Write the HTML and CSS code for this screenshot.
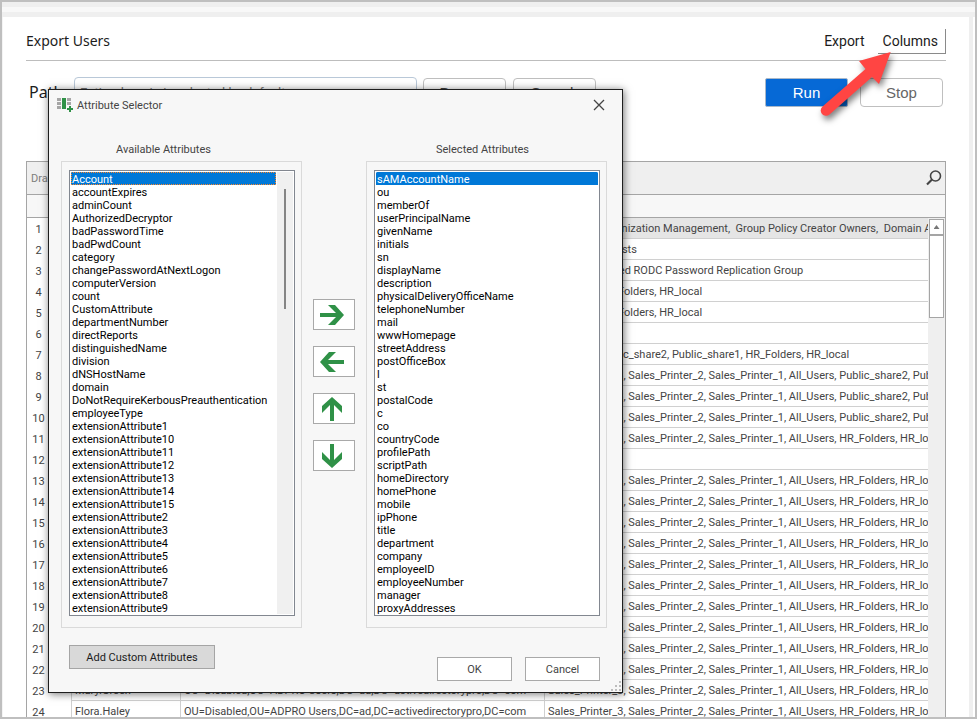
FILE: index.html
```html
<!DOCTYPE html>
<html lang="en">
<head>
    <title>Export Users</title>
    <meta charset="utf-8">
    <link rel="stylesheet" href="styles.css">
</head>
<body>
    <div class="window">
        <div class="strip"></div>
        <div class="page">
            <header class="page-header">
                <h1>Export Users</h1>
                <nav class="menu">
                    <a href="#export">Export</a>
                    <a href="#columns" class="active">Columns</a>
                </nav>
            </header>

            <div class="path-row">
                <label for="path">Path</label>
                <input type="text" id="path" placeholder="Entire domain is selected by default">
                <button class="btn">Browse</button>
                <button class="btn">Search</button>
                <div class="run-buttons">
                    <button class="btn btn-run">Run</button>
                    <button class="btn btn-stop">Stop</button>
                </div>
            </div>

            <div class="grid">
                <div class="group-bar">
                    <span>Drag a column header here to group by that column</span>
                    <button class="search-btn" aria-label="Search">
                        <svg width="16" height="16" viewBox="0 0 16 16" fill="none" stroke="#444">
                            <circle cx="9.5" cy="6" r="5" stroke-width="1.6"/>
                            <path d="M6 9.5L1 14.5" stroke-width="2.2"/>
                        </svg>
                    </button>
                </div>
                <div class="column-bar"></div>
                <div class="grid-body">
                    <table>
                        <colgroup><col class="c-num"><col class="c-name"><col class="c-ou"><col></colgroup>
                        <tbody id="rows"></tbody>
                    </table>
                    <div class="grid-scroll">
                        <div class="scroll-up"></div>
                        <div class="scroll-thumb"></div>
                    </div>
                </div>
            </div>
        </div>
    </div>

    <div class="dialog" role="dialog" aria-labelledby="dialog-title">
        <div class="title-bar">
            <svg width="17" height="16" viewBox="0 0 17 16">
                <path fill="#a6a6a6" d="M0 1h4v3H0zM0 5h4v3H0zM0 9h4v3H0zM10 1h4v3h-4zM10 5h4v3h-4z"/>
                <path fill="#2f9147" d="M5 1h4v11H5zM12 9h2v2h2v2h-2v2h-2v-2h-2v-2h2z"/>
            </svg>
            <span id="dialog-title">Attribute Selector</span>
            <button class="close-btn" aria-label="Close">
                <svg width="12" height="12" viewBox="0 0 12 12"><path d="M1 1l10 10M11 1L1 11" stroke="#444" stroke-width="1.3"/></svg>
            </button>
        </div>

        <div class="lists">
            <div class="list-col">
                <label class="label-available" for="available">Available Attributes</label>
                <div class="group">
                    <div class="listbox">
                        <select id="available" class="focused" size="34">
                            <option selected>Account</option>
                            <option>accountExpires</option>
                            <option>adminCount</option>
                            <option>AuthorizedDecryptor</option>
                            <option>badPasswordTime</option>
                            <option>badPwdCount</option>
                            <option>category</option>
                            <option>changePasswordAtNextLogon</option>
                            <option>computerVersion</option>
                            <option>count</option>
                            <option>CustomAttribute</option>
                            <option>departmentNumber</option>
                            <option>directReports</option>
                            <option>distinguishedName</option>
                            <option>division</option>
                            <option>dNSHostName</option>
                            <option>domain</option>
                            <option>DoNotRequireKerbousPreauthentication</option>
                            <option>employeeType</option>
                            <option>extensionAttribute1</option>
                            <option>extensionAttribute10</option>
                            <option>extensionAttribute11</option>
                            <option>extensionAttribute12</option>
                            <option>extensionAttribute13</option>
                            <option>extensionAttribute14</option>
                            <option>extensionAttribute15</option>
                            <option>extensionAttribute2</option>
                            <option>extensionAttribute3</option>
                            <option>extensionAttribute4</option>
                            <option>extensionAttribute5</option>
                            <option>extensionAttribute6</option>
                            <option>extensionAttribute7</option>
                            <option>extensionAttribute8</option>
                            <option>extensionAttribute9</option>
                        </select>
                        <div class="list-scroll"><div class="list-thumb"></div></div>
                    </div>
                </div>
            </div>

            <div class="move-buttons">
                <button aria-label="Add"><svg viewBox="0 0 24 24"><path d="M0 10h16L8 2h7l9 10-9 10H8l8-8H0z"/></svg></button>
                <button aria-label="Remove"><svg viewBox="0 0 24 24"><path d="M24 10H8l8-8H9L0 12l9 10h7l-8-8h16z"/></svg></button>
                <button aria-label="Move up"><svg viewBox="0 0 24 24"><path d="M10 24V8l-8 8V9l10-9 10 9v7l-8-8v16z"/></svg></button>
                <button aria-label="Move down"><svg viewBox="0 0 24 24"><path d="M10 0v16L2 8v7l10 9 10-9V8l-8 8V0z"/></svg></button>
            </div>

            <div class="list-col">
                <label class="label-selected" for="selected">Selected Attributes</label>
                <div class="group">
                    <div class="listbox">
                        <select id="selected" size="34">
                            <option selected>sAMAccountName</option>
                            <option>ou</option>
                            <option>memberOf</option>
                            <option>userPrincipalName</option>
                            <option>givenName</option>
                            <option>initials</option>
                            <option>sn</option>
                            <option>displayName</option>
                            <option>description</option>
                            <option>physicalDeliveryOfficeName</option>
                            <option>telephoneNumber</option>
                            <option>mail</option>
                            <option>wwwHomepage</option>
                            <option>streetAddress</option>
                            <option>postOfficeBox</option>
                            <option>l</option>
                            <option>st</option>
                            <option>postalCode</option>
                            <option>c</option>
                            <option>co</option>
                            <option>countryCode</option>
                            <option>profilePath</option>
                            <option>scriptPath</option>
                            <option>homeDirectory</option>
                            <option>homePhone</option>
                            <option>mobile</option>
                            <option>ipPhone</option>
                            <option>title</option>
                            <option>department</option>
                            <option>company</option>
                            <option>employeeID</option>
                            <option>employeeNumber</option>
                            <option>manager</option>
                            <option>proxyAddresses</option>
                        </select>
                    </div>
                </div>
            </div>
        </div>

        <div class="dialog-footer">
            <button class="custom-btn">Add Custom Attributes</button>
            <div class="dialog-actions">
                <button>OK</button>
                <button>Cancel</button>
            </div>
        </div>
        <svg class="grip" width="11" height="11" viewBox="0 0 11 11">
            <path fill="#bdbdbd" d="M8 0h2v2H8zM4 4h2v2H4zM8 4h2v2H8zM0 8h2v2H0zM4 8h2v2H4zM8 8h2v2H8z"/>
        </svg>
    </div>

    <svg class="pointer" width="90" height="90" viewBox="0 0 90 90">
        <path fill="#ff4543" d="M80.700 12L49 21l6.500 8L12.500 66.500a5.300 5.300 0 0 0 7 8L62 37l7 7z"/>
    </svg>

    <script src="script.js"></script>
</body>
</html>
```

FILE: styles.css
```css
* {
    box-sizing: border-box;
}
body {
    margin: 0;
    font-family: Roboto, Tahoma, sans-serif;
    font-size: 11px;
    color: #444;
}
button, input, select {
    font-family: inherit;
    font-size: inherit;
    color: inherit;
}
.window {
    display: flex;
    flex-direction: column;
    height: 100vh;
    overflow: hidden;
    border: 2px solid #bfbfbf;
    background: #fff;
}
.strip {
    flex: none;
    height: 15px;
    background: #f8f8f8;
    border-top: 5px solid #efefef;
    border-bottom: 5px solid #efefef;
}
.page {
    flex: 1;
    min-height: 0;
    margin-right: 2px;
    padding: 12px 23px 0;
    border-left: 1px solid #f4f4f4;
    border-right: 4px solid #efefef;
    display: flex;
    flex-direction: column;
}
.page-header {
    flex: none;
    display: flex;
    justify-content: space-between;
    align-items: flex-start;
    height: 32px;
    border-bottom: 1px solid #bdbdbd;
    font-family: "Noto Sans", Tahoma, sans-serif;
    color: #1c1c1c;
}
h1 {
    margin: 0;
    font-size: 14px;
    font-weight: normal;
    line-height: 24px;
}
.menu {
    display: flex;
    gap: 13px;
    font-family: Roboto, Tahoma, sans-serif;
    font-size: 14px;
    line-height: 24px;
}
.menu a {
    color: inherit;
    text-decoration: none;
}
.menu .active {
    padding: 0 7px 0 5px;
    border-right: 1px solid #8a8a8a;
    border-bottom: 1px solid #8a8a8a;
}
.path-row {
    flex: none;
    display: flex;
    align-items: center;
    height: 100px;
    padding: 0 3px 38px;
}
.path-row label {
    width: 45px;
    font-size: 16px;
    font-family: "Noto Sans", Tahoma, sans-serif;
    color: #1c1c1c;
}
.path-row input {
    width: 343px;
    height: 30px;
    margin-right: 6px;
    padding: 0 5px;
    border: 1px solid #b9c8d8;
    border-radius: 4px;
    font-size: 13px;
}
.path-row input::placeholder {
    color: #777;
}
.btn {
    width: 83px;
    height: 29px;
    margin-right: 7px;
    padding: 0;
    border: 1px solid #bfbfbf;
    border-radius: 4px;
    background: #fff;
    font-family: "Liberation Sans", Arial, sans-serif;
    font-size: 15px;
}
.run-buttons {
    display: flex;
    gap: 12px;
    margin-left: auto;
}
.run-buttons .btn {
    margin-right: 0;
}
.btn-run {
    background: #0669d6;
    border-color: #a9b8c9;
    border-radius: 2px;
    color: #fff;
}
.btn-stop {
    color: #666;
}
.grid {
    flex: 1;
    min-height: 0;
    display: flex;
    flex-direction: column;
    border: 1px solid #a5a5a5;
    border-bottom: none;
}
.group-bar {
    flex: none;
    display: flex;
    justify-content: space-between;
    align-items: center;
    height: 33px;
    padding: 0 3px 0 4px;
    background: #efefef;
    border-bottom: 1px solid #a5a5a5;
    font-size: 11px;
    color: #7d7d7d;
}
.search-btn {
    display: flex;
    padding: 0;
    border: none;
    background: none;
}
.column-bar {
    flex: none;
    height: 23px;
    background: #f7f7f7;
    border-bottom: 1px solid #a5a5a5;
}
.grid-body {
    flex: 1;
    min-height: 0;
    display: flex;
    overflow: hidden;
}
.grid table {
    flex: 1;
    width: 0;
    table-layout: fixed;
    border-collapse: separate;
    border-spacing: 0;
}
.c-num {
    width: 44px;
}
.c-name {
    width: 109px;
}
.c-ou {
    width: 364px;
}
td, th {
    height: 21px;
    padding: 2px 3px 0;
    border-bottom: 1px solid #d0d0d0;
    border-left: 1px solid #d0d0d0;
    line-height: 18px;
    overflow: hidden;
    white-space: pre;
}
th {
    padding: 2px 21px 0 0;
    border: none;
    font-weight: normal;
}
tr:first-child td {
    background: #e5e5e5;
}
.grid-scroll {
    width: 17px;
    padding: 1px 1px 0;
    background: #efefef;
}
.scroll-up {
    display: flex;
    justify-content: center;
    height: 16px;
    padding-top: 5px;
    border: 1px solid #a5a5a5;
    background: #fff;
}
.scroll-up::before {
    content: "";
    width: 6px;
    height: 4px;
    background: #777;
    clip-path: polygon(50% 0, 100% 100%, 0 100%);
}
.scroll-thumb {
    height: 83px;
    border: 1px solid #a5a5a5;
    background: #fff;
}

/* attribute selector */
.dialog {
    position: absolute;
    left: 48px;
    top: 89px;
    width: 575px;
    padding: 0 15px 11px 12px;
    border: 1px solid #1e1e1e;
    background: #f7f7f7;
    box-shadow: 1px 1px 8px rgba(0, 0, 0, 0.55);
}
.title-bar {
    display: flex;
    align-items: center;
    height: 30px;
    margin-left: -4px;
    gap: 3px;
}
.close-btn {
    display: flex;
    margin-left: auto;
    margin-right: 2px;
    padding: 0;
    border: none;
    background: none;
}
.lists {
    display: flex;
    padding-top: 21px;
}
.list-col {
    flex: 1;
    min-width: 0;
}
.list-col label {
    display: block;
    height: 20px;
    line-height: 18px;
}
.label-available {
    padding-left: 55px;
}
.label-selected {
    padding-left: 70px;
}
.group {
    padding: 8px 6px 11px 7px;
    border: 1px solid #dadada;
}
.listbox {
    display: flex;
    padding: 1px;
    border: 1px solid #828790;
    background: #fff;
}
.listbox select {
    flex: 1;
    min-width: 0;
    height: 442px;
    padding: 0;
    border: none;
    outline: none;
    background: #fff;
    color: #000;
    overflow: hidden;
}
.listbox option {
    height: 13px;
    min-height: 13px;
    padding: 1px 1px 0;
    line-height: 12px;
}
.listbox option:checked {
    background: #0078d7 linear-gradient(#0078d7, #0078d7);
    color: #fff;
}
.focused option:checked {
    outline: 1px dotted #ff8728;
    outline-offset: -1px;
}
.list-scroll {
    width: 17px;
    padding: 17px 0 0 7px;
    border-left: 1px solid #fff;
    background: #f0f0f0;
}
.list-thumb {
    width: 2px;
    height: 120px;
    background: #858585;
}
.move-buttons {
    flex: none;
    width: 64px;
    padding-top: 158px;
    display: flex;
    flex-direction: column;
    align-items: center;
    gap: 16px;
}
.move-buttons button {
    display: flex;
    align-items: center;
    justify-content: center;
    width: 42px;
    height: 31px;
    padding: 0 4px 0 0;
    border: 1px solid #a9a9a9;
    background: #fff;
}
.move-buttons svg {
    width: 24px;
    height: 24px;
    fill: #2f9147;
}
.dialog-footer {
    display: flex;
    justify-content: space-between;
    align-items: flex-start;
    padding: 17px 7px 0 8px;
}
.custom-btn {
    width: 146px;
    height: 24px;
    padding: 0;
    border: 1px solid #a5a5a5;
    background: #d9d9d9;
    color: #1c1c1c;
}
.dialog-actions {
    display: flex;
    gap: 13px;
    padding-top: 12px;
}
.dialog-actions button {
    width: 75px;
    height: 24px;
    padding: 0;
    border: 1px solid #a9a9a9;
    background: #fff;
}
.grip {
    position: absolute;
    right: 0;
    bottom: 0;
}

/* red arrow over the Columns tab */
.pointer {
    position: absolute;
    top: 40px;
    right: 77px;
    filter: drop-shadow(2px 4px 3px rgba(0, 0, 0, 0.5));
    pointer-events: none;
}
```

FILE: script.js
```js
const ou = 'OU=Disabled,OU=ADPRO Users,DC=ad,DC=activedirectorypro,DC=com';
const printers = 'Sales_Printer_3, Sales_Printer_2, Sales_Printer_1, All_Users, ';
const shares = printers + 'Public_share2, Public_share1, HR_Folders, HR_local';
const folders = printers + 'HR_Folders, HR_local';

const groups = [
    'Exchange Organization Management,  Group Policy Creator Owners,  Domain Admins',
    'Guests, All Guests',
    'Contacts, Denied RODC Password Replication Group',
    'All_Users, HR_Folders, HR_local',
    'All_Users, HR_Folders, HR_local',
    '',
    'All_Users, Public_share2, Public_share1, HR_Folders, HR_local',
    shares, shares, shares,
    folders,
    ''
];
while (groups.length < 24) {
    groups.push(folders);
}

const names = { 23: 'Mary.Green', 24: 'Flora.Haley' };
const body = document.getElementById('rows');
groups.forEach((group, i) => {
    const row = body.insertRow();
    const num = document.createElement('th');
    num.textContent = i + 1;
    row.appendChild(num);
    [names[i + 1] || '', ou, group].forEach(text => {
        row.insertCell().textContent = text;
    });
});
```
